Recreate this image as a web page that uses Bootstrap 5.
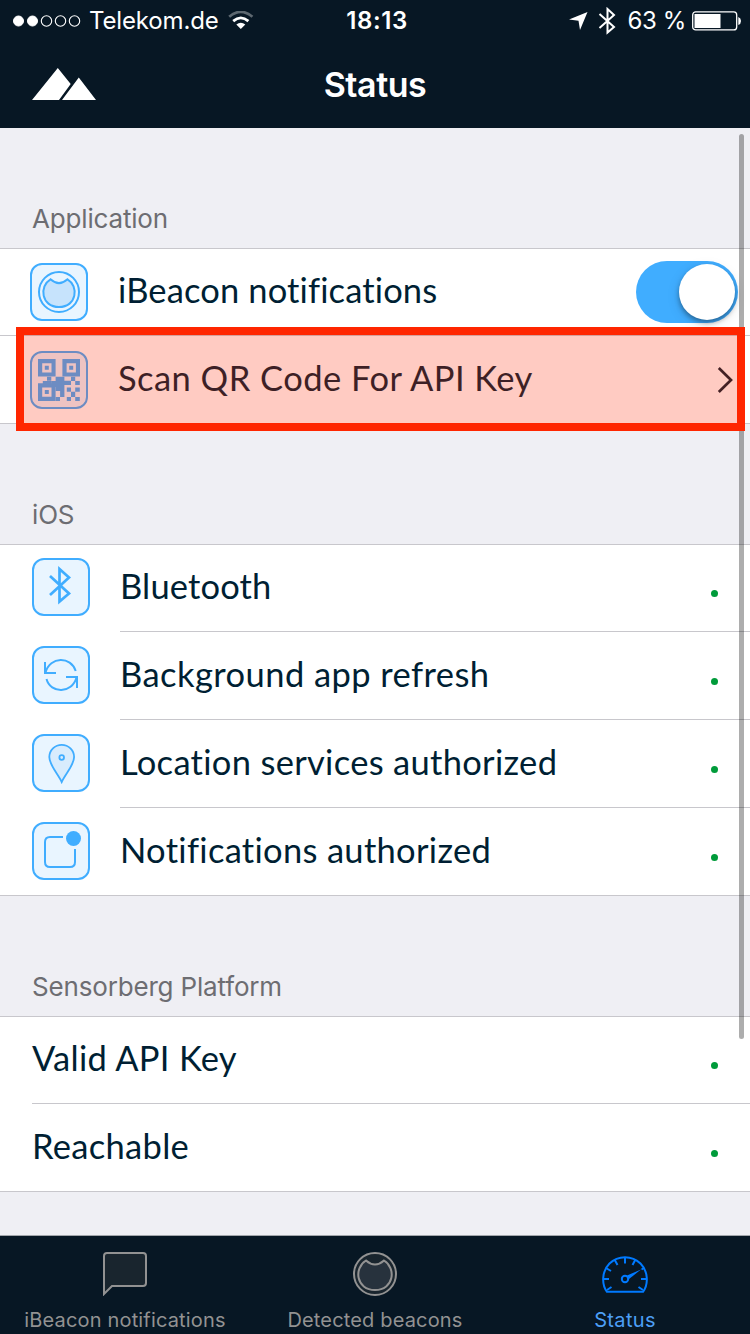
<!DOCTYPE html>
<html lang="en">
<head>
<meta charset="utf-8">
<meta name="viewport" content="width=device-width, initial-scale=1">
<title>Status</title>
<link href="https://cdn.jsdelivr.net/npm/bootstrap@5.3.0/dist/css/bootstrap.min.css" rel="stylesheet">
<style>
body{font-family:Inter,sans-serif;background:#efeff4;width:750px;height:1334px}
svg{display:block;flex:none}
.screen{height:1334px}
.topbar{height:128px;background:#071724;color:#fff}
.statusline{height:41px;font-size:24px;line-height:41px}
.statusline .carrier{letter-spacing:-.15px;margin-left:6px}
.wifi{left:228px;top:11px}
.clock{font-weight:600;letter-spacing:.6px}
.battery-text{margin-left:11px;letter-spacing:-.4px}
.battery{margin-left:6px}
.titlebar{height:87px}
.titlebar h1{font-size:34px;font-weight:600;line-height:87px;letter-spacing:-.45px}
.peaks{left:32px;top:27px}
.group-title{height:120px;padding:0 0 14px 32px;font-size:26px;line-height:30px;color:#6d6d72;font-weight:400;letter-spacing:-.17px}
.rows{border-top:1px solid #c8c7cc;border-bottom:1px solid #c8c7cc;background:#fff}
.entry{height:88px;color:#001f33;font-family:Lato,sans-serif;font-size:34.5px}
.entry:first-child{height:87px}
.entry:last-child{height:87px}
.entry>.inner{height:100%;border-bottom:1px solid #c8c7cc;padding-bottom:3px}
.entry:first-child>.inner{padding-bottom:4px}
.entry:last-child>.inner{border-bottom:0;padding-bottom:3px}
.entry>.flush{margin-left:32px}
.entry-label{letter-spacing:.3px;line-height:44px;white-space:nowrap}
.l-beacon{letter-spacing:.13px}
.l-scan{letter-spacing:.46px}
.l-blue{letter-spacing:.15px}
.l-back{letter-spacing:.43px}
.iconbox{width:120px;padding:14px 0 0 32px}
.entry:first-child>.iconbox{padding-top:13px}
.iconbox.shifted{width:118px;padding:4px 0 0 30px}
.dot{width:7px;height:7px;border-radius:50%;background:#009b3a;margin:15px 32px 0 auto}
.toggle{width:102px;height:62px;border-radius:31px;background:#40adff;margin:4px 12px 0 auto;padding:3px}
.knob{width:56px;height:56px;border-radius:50%;background:#fff;box-shadow:0 3px 5px rgba(0,0,0,.35),0 4px 14px rgba(0,0,0,.1)}
.chevron{margin:3px 16px 0 auto}
.scrollthumb{left:739px;top:134px;width:5px;height:905px;border-radius:3px;background:rgba(0,0,0,.32);z-index:2}
.callout-frame{left:16px;top:199px;width:729px;height:104px;border:8px solid #ff2600;background:rgba(255,38,0,.24);z-index:3}
.tabs{height:99px;background:#071724;border-top:1px solid #a2a6ab;font-size:20px;color:#929292}
.tabs a{width:250px;color:inherit;padding-top:16px}
.tabs a.active{color:#4d9ff5}
.tabs span{line-height:24px;margin-top:12px;letter-spacing:.16px;white-space:nowrap}
.tabs .active span{letter-spacing:.35px}
</style>
</head>
<body>
<div class="screen d-flex flex-column position-relative overflow-hidden mx-auto">
  <header class="topbar flex-shrink-0">
    <div class="statusline d-flex position-relative align-items-center">
      <svg width="72" height="14" viewBox="0 0 72 14" style="margin-left:11px" fill="#fff" stroke="#fff"><circle cx="7.5" cy="7" r="5"/><circle cx="21.5" cy="7" r="5"/><g fill="none" stroke-width="1.1"><circle cx="35.5" cy="7" r="5.2"/><circle cx="49.5" cy="7" r="5.2"/><circle cx="63.5" cy="7" r="5.2"/></g></svg>
      <span class="carrier">Telekom.de</span>
      <svg class="wifi position-absolute" width="26" height="20" viewBox="0 0 26 20" fill="none" stroke="#fff" stroke-width="2.8"><path d="M1.2 5.8Q12.8-4 24.4 5.8" opacity=".35"/><path d="M5.2 10.1Q12.8 3.6 20.4 10.1"/><path d="M12.8 18L8.300 13.500Q12.800 9.800 17.300 13.500Z" fill="#fff" stroke="none"/></svg>
      <span class="clock position-absolute start-50 translate-middle-x ps-1">18:13</span>
      <div class="position-absolute end-0 d-flex align-items-center pe-2">
        <svg width="20" height="20" viewBox="0 0 20 20" fill="#fff"><path d="M0 8.5L18.5 1L11 19L9.5 9.8Z"/></svg>
        <svg class="ms-2" width="20" height="28" viewBox="0 0 20 28" fill="none" stroke="#fff" stroke-width="2"><path d="M2.500 7L17 20L10.500 25.500V2L17 8L2.500 21"/></svg>
        <span class="battery-text">63 %</span>
        <svg class="battery" style="margin-right:-6px" width="56" height="20" viewBox="0 0 56 20"><rect x=".7" y=".9" width="44" height="18" rx="3" fill="none" stroke="#fff" stroke-width="1.3"/><path d="M2.500 3H28.500V17H2.500ZM46.300 6Q49 7 49 10T46.300 14Z" fill="#fff"/></svg>
      </div>
    </div>
    <div class="titlebar position-relative text-center">
      <svg class="peaks position-absolute" width="64" height="32" viewBox="0 0 64 32" fill="#fff"><path d="M0 32L25.800 0L38.700 16L27 32ZM30 32L46.800 9.500L64 32Z"/></svg>
      <h1 class="m-0">Status</h1>
    </div>
  </header>

  <main class="flex-grow-1 overflow-hidden">
    <section class="position-relative">
      <h2 class="group-title m-0 d-flex align-items-end">Application</h2>
      <div class="rows">
        <div class="entry d-flex">
          <div class="inner d-flex align-items-center flex-grow-1">
            <div class="iconbox shifted">
              <svg width="58" height="58" viewBox="0 0 58 58" fill="#e9f5ff" stroke="#40adff" stroke-width="2"><rect x="1" y="1" width="56" height="56" rx="11"/><circle cx="29" cy="29" r="20"/><path d="M20.500 16.300Q29 24 37.500 16.300C49 23 47 44 29 44S9 23 20.500 16.300Z" fill="#c6e3fc"/></svg>
            </div>
            <span class="entry-label l-beacon">iBeacon notifications</span>
            <div class="toggle d-flex justify-content-end"><div class="knob"></div></div>
          </div>
        </div>
        <div class="entry d-flex">
          <div class="inner d-flex align-items-center flex-grow-1">
            <div class="iconbox shifted">
              <svg width="58" height="58" viewBox="0 0 58 58"><rect x="1" y="1" width="56" height="56" rx="11" fill="#e9f5ff" stroke="#40adff" stroke-width="2"/><g fill="#40adff"><path fill-rule="evenodd" d="M8 8h17.6v17.6h-17.6zM12.2 12.2v9.3h9.3v-9.3zM32.4 8h17.6v17.6h-17.6zM36.6 12.2v9.3h9.3v-9.3zM8 32.3h17.6v17.6h-17.6zM12.2 36.5v9.3h9.3v-9.3z"/><path d="M14.8 14.8h4v4h-4zM39.2 14.8h4v4h-4zM14.8 39.1h4v4h-4zM17 25.8h4.3v4h-4.3zM25.6 25.8h8.8v4h6.6v4.1h-6.6v12h-4.3v-6h-4.5v-4h-4v-6h4zM41 25.8h4.2v4.1h-4.2zM12.8 29.9h8.7v3.2h-8.7zM45.2 29.9h4.6v4.1h-4.6zM25.6 45.9h4.4v4.1h-4.4zM36.8 36.6h4.2v4.2h-4.2zM45.2 36.6h4.6v4.2h-4.6zM41 40.8h4.2v5.1h-4.2zM36.8 45.9h4.2v4.1h-4.2zM45.2 45.9h4.6v4.1h-4.6z"/></g></svg>
            </div>
            <span class="entry-label l-scan">Scan QR Code For API Key</span>
            <svg class="chevron" width="18" height="28" viewBox="0 0 18 28" fill="none" stroke="#0a1f30" stroke-width="2.7"><path d="M2.800 2L15 14L2.800 26"/></svg>
          </div>
        </div>
      </div>
      <div class="callout-frame position-absolute"></div>
    </section>

    <section>
      <h2 class="group-title m-0 d-flex align-items-end">iOS</h2>
      <div class="rows">
        <div class="entry d-flex">
          <div class="iconbox"><svg width="58" height="58" viewBox="0 0 58 58" fill="none" stroke="#40adff"><rect x="1" y="1" width="56" height="56" rx="11" fill="#e9f5ff" stroke-width="2"/><path d="M18 18L37 35.500L27.500 43.500V11L37 19.500L18 37" stroke-width="2.7"/></svg></div>
          <div class="inner d-flex align-items-center flex-grow-1"><span class="entry-label l-blue">Bluetooth</span><i class="dot"></i></div>
        </div>
        <div class="entry d-flex">
          <div class="iconbox"><svg width="58" height="58" viewBox="0 0 58 58" fill="none" stroke="#40adff" stroke-width="2"><rect x="1" y="1" width="56" height="56" rx="11" fill="#e9f5ff"/><path d="M13 16V27H24M13.500 26.500C18 10 39 10 43.700 25M45 42V31H34M44.500 31.500C40 48 18.500 48 14.500 33"/></svg></div>
          <div class="inner d-flex align-items-center flex-grow-1"><span class="entry-label l-back">Background app refresh</span><i class="dot"></i></div>
        </div>
        <div class="entry d-flex">
          <div class="iconbox"><svg width="58" height="58" viewBox="0 0 58 58" fill="#d8ecfd" stroke="#40adff" stroke-width="1.8"><rect x="1" y="1" width="56" height="56" rx="11" fill="#e9f5ff" stroke-width="2"/><path d="M29.700 48C26 40 17.300 31 17.300 23A12.400 12.200 0 0 1 42.100 23C42.100 31 33.400 40 29.700 48Z"/><circle cx="29.700" cy="23.500" r="2.300"/></svg></div>
          <div class="inner d-flex align-items-center flex-grow-1"><span class="entry-label">Location services authorized</span><i class="dot"></i></div>
        </div>
        <div class="entry d-flex">
          <div class="iconbox"><svg width="58" height="58" viewBox="0 0 58 58" fill="none" stroke="#40adff" stroke-width="2"><rect x="1" y="1" width="56" height="56" rx="11" fill="#e9f5ff"/><path d="M31 15H18Q13 15 13 20V40Q13 45 18 45H38Q43 45 43 40V27"/><circle cx="41.500" cy="16.500" r="7.500" fill="#40adff" stroke="none"/></svg></div>
          <div class="inner d-flex align-items-center flex-grow-1"><span class="entry-label">Notifications authorized</span><i class="dot"></i></div>
        </div>
      </div>
    </section>

    <section>
      <h2 class="group-title m-0 d-flex align-items-end">Sensorberg Platform</h2>
      <div class="rows">
        <div class="entry d-flex"><div class="inner flush d-flex align-items-center flex-grow-1"><span class="entry-label">Valid API Key</span><i class="dot"></i></div></div>
        <div class="entry d-flex"><div class="inner flush d-flex align-items-center flex-grow-1"><span class="entry-label">Reachable</span><i class="dot"></i></div></div>
      </div>
    </section>
  </main>
  <div class="scrollthumb position-absolute"></div>

  <nav class="tabs d-flex flex-shrink-0">
    <a class="d-flex flex-column align-items-center text-decoration-none" href="#"><svg width="44" height="44" viewBox="0 0 44 44" fill="#19252e" stroke="#929292" stroke-width="2"><path d="M1 42V4Q1 1 4 1H40Q43 1 43 4V31Q43 34 40 34H9Z"/></svg><span>iBeacon notifications</span></a>
    <a class="d-flex flex-column align-items-center text-decoration-none" href="#"><svg width="44" height="44" viewBox="0 0 44 44" fill="#19252e" stroke="#929292" stroke-width="2"><circle cx="22" cy="22" r="21"/><path d="M13 8.500Q22 16.500 31 8.500C43.500 16 41 38 22 38S.5 16 13 8.500Z" fill="#27323d"/></svg><span>Detected beacons</span></a>
    <a class="active d-flex flex-column align-items-center text-decoration-none" href="#"><svg width="46" height="44" viewBox="0 0 46 44" fill="none" stroke="#007aff" stroke-width="2"><path d="M5 39.800C-.8 32 0 19 7.500 11.500C16 3 30 3 38.500 11.500C46 19 46.800 32 41 39.800Z"/><path d="M23 5V11.500M1 27H7M39 27H45M12.500 7.500L15.500 13M33.500 7.500L30.500 13M4 16L9 19M42 16L39.500 17.500M5 38L9.500 35M41 38L36.500 35"/><circle cx="23" cy="27" r="3.200"/><path d="M25 23.500L39 17.500L27 27Z" fill="#007aff" stroke="none"/></svg><span>Status</span></a>
  </nav>
</div>
<script src="https://cdn.jsdelivr.net/npm/bootstrap@5.3.0/dist/js/bootstrap.bundle.min.js"></script>
</body>
</html>
